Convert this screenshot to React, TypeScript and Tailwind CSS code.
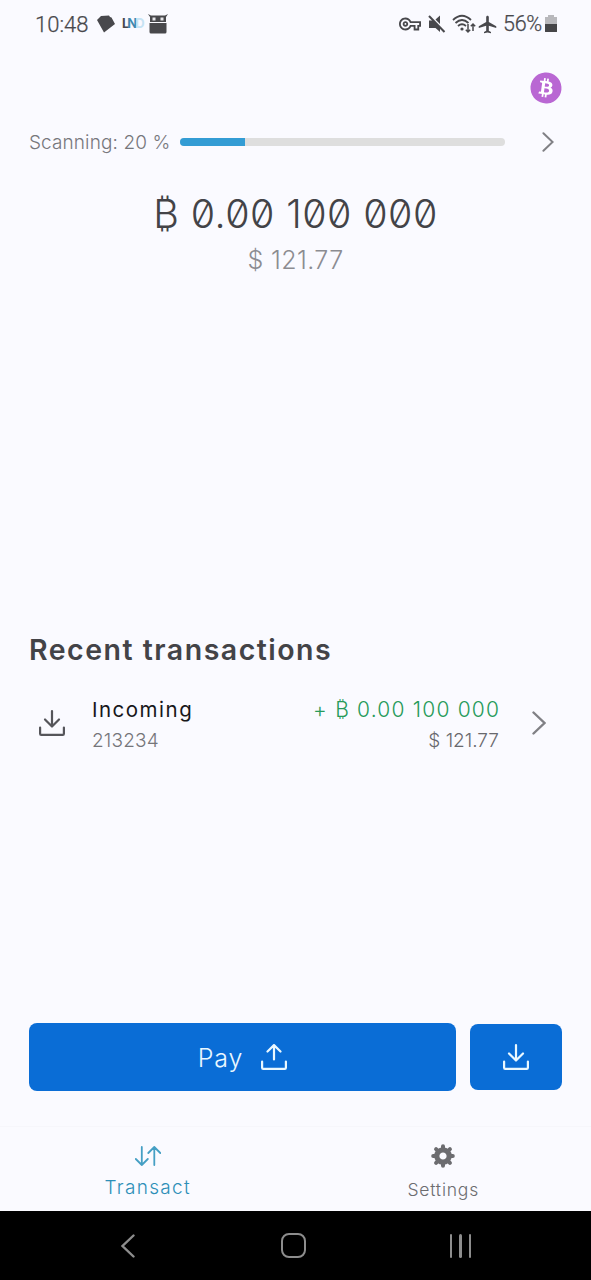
import { FaBitcoin } from "react-icons/fa";
import { MdAirplanemodeActive, MdOutlineVpnKey } from "react-icons/md";

type IconProps = { className?: string };

function TrayIcon({ up = false, className }: IconProps & { up?: boolean }) {
  return (
    <svg
      viewBox="0 0 26 26"
      fill="none"
      stroke="currentColor"
      strokeWidth="2.2"
      strokeLinecap="round"
      strokeLinejoin="round"
      className={className}
    >
      <path d="M1.1 17.5v6.2q0 1.1 1.1 1.1h21.6q1.1 0 1.1-1.1v-6.2" />
      {up ? <path d="M13 15.500V1.100M6.500 7.500 13 1.100l6.500 6.400" /> : <path d="M13 1.100V16M6 9.500l7 7 7-7" />}
    </svg>
  );
}

function Chevron({ className }: IconProps) {
  return (
    <svg
      viewBox="0 0 14 24"
      fill="none"
      stroke="currentColor"
      strokeWidth="2.4"
      strokeLinecap="round"
      className={className}
    >
      <path d="M1.5 1.5 12.5 12l-11 10.5" />
    </svg>
  );
}

function GearIcon({ className }: IconProps) {
  return (
    <svg viewBox="-12 -12 24 24" fill="none" stroke="currentColor" className={className}>
      <circle r="6.2" strokeWidth="5.2" />
      {[0, 45, 90, 135].map((angle) => (
        <g key={angle} transform={`rotate(${angle})`} strokeWidth="4" strokeLinecap="round">
          <path d="M0-9.8V-7M0 7v2.8" />
        </g>
      ))}
    </svg>
  );
}

function StatusBar() {
  return (
    <div className="flex h-12 items-center pr-[34px] pl-[35px] font-[Roboto] text-[22px] text-[#48484c]">
      <span className="w-[54px] font-light whitespace-nowrap [-webkit-text-stroke:0.25px]">10:48</span>
      <svg viewBox="0 0 18 18" fill="currentColor" className="ml-2 h-[18px] w-[18px]">
        <path d="M0 5 4 1l8-.5 1 1.500 1.500.5L18 9 7 17.500Z" />
      </svg>
      <span className="ml-[7px] flex w-[20px] font-[Inter] text-[13px] font-bold tracking-[-2px]">
        <span>L</span>
        <span className="text-[#3e88ae]">N</span>
        <span className="text-[#c7e3f4]">D</span>
      </span>
      <svg viewBox="0 0 20 20" fill="currentColor" className="ml-1.5 h-5 w-5">
        <path d="m0 0 3 1.500h14L20 0l-2 3v5H2V3Z" />
        <path d="M1.500 9h17v9q0 1.500-1.500 1.500H3q-1.500 0-1.500-1.500Z" />
        <path d="M4.500 3.500h3v3h-3ZM12.500 3.500h3v3h-3Z" fill="#e6e6ea" />
      </svg>

      <MdOutlineVpnKey className="ml-auto h-[22px] w-[22px]" />
      <svg viewBox="0 0 18 18" fill="currentColor" className="ml-[7px] h-[18px] w-[18px]">
        <path d="M1 5.500h4L12 12.500V17L7.500 13H1ZM7.500 4.500 12 .5v8.500Z" />
        <path d="m1 1 15.500 16" stroke="currentColor" strokeWidth="2" />
      </svg>
      <svg
        viewBox="0 0 24 20"
        fill="none"
        stroke="currentColor"
        strokeWidth="1.8"
        className="ml-1.5 h-5 w-6"
      >
        <path d="M1 6q9-8.500 18 0M3.500 9q6.500-6 13 0M6 12q4-3.500 8 0" />
        <circle cx="10" cy="15" r="1.6" fill="currentColor" stroke="none" />
        <path d="M16 10v8M13.800 15.800 16 18l2.200-2.200M21 17v-7M18.800 12.200 21 10l2.200 2.200" strokeWidth="1.5" />
      </svg>
      <MdAirplanemodeActive className="ml-px h-[21px] w-[21px]" />
      <span className="ml-[5px] w-[42px] text-[21.5px] font-light tracking-[-0.3px] whitespace-nowrap [-webkit-text-stroke:0.25px]">
        56%
      </span>
      <svg viewBox="0 0 12 18" className="h-[18px] w-3" fill="#b8b8bc">
        <path d="M3 0h6v2h3v8H0V2h3Z" />
        <path d="M0 9h12v7.500q0 .5-.5.500H.5q-.5 0-.5-.5Z" fill="#454548" />
      </svg>
    </div>
  );
}

function ScanProgress({ percent }: { percent: number }) {
  return (
    <div className="mt-6 flex h-7 items-center pr-[37px] pl-[29px]">
      <span className="w-[151px] pt-0.5 text-[19px] font-light tracking-[0.1px] whitespace-nowrap text-[#77777c]">
        Scanning: {percent} %
      </span>
      <div className="h-2 w-[325px] overflow-hidden rounded-full bg-[#dedede]">
        <div className="h-full bg-[#339cd4]" style={{ width: `${percent}%` }} />
      </div>
      <Chevron className="ml-auto h-5 w-3 text-[#808085]" />
    </div>
  );
}

function Balance() {
  return (
    <div className="mt-8 flex flex-col items-center whitespace-nowrap">
      <div className="h-[52px] text-[39.5px] leading-[52px] font-light tracking-[0.4px] text-[#434347] slashed-zero">
        ₿ 0.00 100 000
      </div>
      <div className="h-10 text-[25px] leading-10 font-light tracking-[0.4px] text-[#8c8c91]">$ 121.77</div>
    </div>
  );
}

function Transaction() {
  return (
    <div className="mt-[18px] flex h-[70px] items-center pr-[45px] pl-[39px]">
      <TrayIcon className="h-[26px] w-[26px] text-[#55555a]" />
      <div className="ml-[27px] flex flex-col pt-[3px] whitespace-nowrap">
        <span className="h-8 text-[20.5px] leading-8 tracking-[1.5px] text-[#17171a]">Incoming</span>
        <span className="h-[30px] text-[19px] leading-[30px] font-light tracking-[0.2px] text-[#75757a]">
          213234
        </span>
      </div>
      <div className="ml-auto flex flex-col items-end pt-[3px] whitespace-nowrap">
        <span className="-mr-[1.2px] h-8 text-[21px] leading-8 font-light tracking-[1.2px] text-[#279a5a]">
          + ₿ 0.00 100 000
        </span>
        <span className="h-[30px] text-[19px] leading-[30px] font-light text-[#68686d]">$ 121.77</span>
      </div>
      <Chevron className="ml-[33px] h-6 w-3.5 text-[#808085]" />
    </div>
  );
}

function TabBar() {
  return (
    <div className="grid h-[85px] grid-cols-2 border-t border-[#f6f6fb]">
      <div className="flex flex-col items-center text-[#459fc4]">
        <svg
          viewBox="0 0 26 20"
          fill="none"
          stroke="currentColor"
          strokeWidth="1.8"
          strokeLinecap="round"
          strokeLinejoin="round"
          className="mt-[19px] h-5 w-[26px]"
        >
          <path d="M6.800 1v18M.8 13l6 6 6-6M19.300 19V1M13.300 7l6-6 6 6" />
        </svg>
        <span className="mt-2 h-7 text-[19px] leading-7 font-light tracking-[1.3px] text-[#2d8fb8]">Transact</span>
      </div>
      <div className="flex flex-col items-center text-[#6c6c70]">
        <GearIcon className="mt-[17px] h-6 w-6" />
        <span className="mt-2 h-7 text-[17.5px] leading-7 font-light tracking-[0.8px]">Settings</span>
      </div>
    </div>
  );
}

function NavigationBar() {
  return (
    <div className="flex h-[69px] items-center bg-black pr-[120px] pl-[121px] text-[#8d8d8d]">
      <Chevron className="h-6 w-3.5 rotate-180" />
      <div className="ml-[146px] h-[25px] w-[25px] rounded-[8px] border-[2.5px] border-current" />
      <div className="ml-auto flex h-6 gap-[7px]">
        <div className="w-[2.5px] rounded-full bg-current" />
        <div className="w-[2.5px] rounded-full bg-current" />
        <div className="w-[2.5px] rounded-full bg-current" />
      </div>
    </div>
  );
}

export default function App() {
  return (
    <div className="flex h-[1280px] w-[591px] flex-col overflow-hidden bg-[#fafaff] font-[Inter,sans-serif]">
      <StatusBar />

      {/* Wallet selector */}
      <div className="mt-6 flex h-8 justify-end pr-[29px]">
        <div className="h-8 w-8 rounded-full bg-[radial-gradient(white_60%,transparent_61%)]">
          <FaBitcoin className="h-8 w-8 -rotate-6 text-[#b967d3]" />
        </div>
      </div>

      <ScanProgress percent={20} />
      <Balance />

      {/* Transactions */}
      <div className="mt-[350px]">
        <h2 className="h-10 pl-[29px] text-[28.5px] leading-10 font-semibold tracking-[1.5px] whitespace-nowrap text-[#434347]">
          Recent transactions
        </h2>
        <Transaction />
      </div>

      {/* Actions */}
      <div className="mt-auto mb-[35px] flex h-[68px] items-center gap-3.5 px-[29px] text-[#eaf8ff]">
        <button className="flex h-[68px] w-[427px] items-center justify-center gap-[18px] rounded-lg bg-[#0a6dd6]">
          <span className="pt-[3px] text-[25px] font-light tracking-[0.8px]">Pay</span>
          <TrayIcon up className="h-[26px] w-[26px]" />
        </button>
        <button className="flex h-[66px] w-[92px] items-center justify-center rounded-lg bg-[#0a6dd6]">
          <TrayIcon className="h-[26px] w-[26px]" />
        </button>
      </div>

      <TabBar />
      <NavigationBar />
    </div>
  );
}
